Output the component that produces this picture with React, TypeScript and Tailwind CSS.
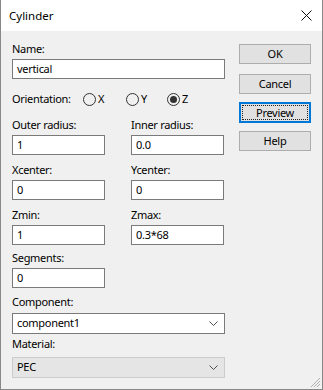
import React from "react";

const font = { fontFamily: '"Noto Sans", "Liberation Sans", sans-serif' };

function Label({ children, className = "" }: { children: React.ReactNode; className?: string }) {
  return <div className={"h-[16px] leading-[16px] text-[11px] tracking-[-0.3px] text-black whitespace-nowrap " + className}>{children}</div>;
}

function Input({ value, className = "" }: { value: string; className?: string }) {
  return (
    <div className={"h-[20px] border border-[#7a7a7a] bg-white pl-[4px] text-[11px] tracking-[-0.3px] leading-[18px] text-black " + className}>
      {value}
    </div>
  );
}

function Chevron() {
  return (
    <svg width="9" height="5" viewBox="0 0 9 5" className="mr-[6px]">
      <path d="M0.5 0.5 L4.5 4.5 L8.5 0.5" fill="none" stroke="#505050" strokeWidth="1" />
    </svg>
  );
}

function Radio({ label, checked }: { label: string; checked?: boolean }) {
  return (
    <div className="flex items-center">
      <div className="w-[13px] h-[13px] rounded-full border border-[#333] bg-[#f0f0f0] flex items-center justify-center">
        {checked && <div className="w-[7px] h-[7px] rounded-full bg-[#333]" />}
      </div>
      <span className="ml-[2px] text-[11px] leading-[16px]">{label}</span>
    </div>
  );
}

function Button({ children, focused }: { children: React.ReactNode; focused?: boolean }) {
  if (focused) {
    return (
      <div className="w-[72px] h-[21px] border-2 border-[#0078d7] bg-[#e1e1e1] p-[1px]">
        <div className="w-full h-full border border-dotted border-[#222] flex items-center justify-center text-[11px] tracking-[-0.3px] leading-[14px]">
          {children}
        </div>
      </div>
    );
  }
  return (
    <div className="w-[72px] h-[20px] border border-[#adadad] bg-[#e1e1e1] flex items-center justify-center text-[11px] tracking-[-0.3px] leading-[16px]">
      {children}
    </div>
  );
}

export default function App() {
  return (
    <div style={font} className="w-[323px] h-[390px] bg-[#f0f0f0] border-x border-b border-[#888] flex flex-col text-black">
      <div className="h-[31px] bg-white flex items-center justify-between pl-[8px] pr-[10px] shrink-0">
        <span className="text-[11.5px] leading-[16px]">Cylinder</span>
        <svg width="11" height="11" viewBox="0 0 11 11">
          <path d="M0.5 0.5 L10.5 10.5 M10.5 0.5 L0.5 10.5" stroke="#111" strokeWidth="1" />
        </svg>
      </div>
      <div className="relative flex-1 flex pl-[11px]">
        <div className="w-[213px] flex flex-col pt-[10px]">
          <Label>Name:</Label>
          <Input value="vertical" className="mt-[2px]" />
          <div className="mt-[12px] h-[16px] flex items-center">
            <span className="text-[11px] tracking-[-0.3px] leading-[16px] w-[71px] whitespace-nowrap">Orientation:</span>
            <div className="w-[43px]"><Radio label="X" /></div>
            <div className="w-[41px]"><Radio label="Y" /></div>
            <Radio label="Z" checked />
          </div>
          <div className="mt-[10px] flex">
            <div className="w-[119px] flex flex-col">
              <Label>Outer radius:</Label>
              <Input value="1" className="mt-[2px] w-[93px]" />
              <Label className="mt-[7px]">Xcenter:</Label>
              <Input value="0" className="mt-[2px] w-[93px]" />
              <Label className="mt-[7px]">Zmin:</Label>
              <Input value="1" className="mt-[2px] w-[93px]" />
            </div>
            <div className="flex flex-col">
              <Label>Inner radius:</Label>
              <Input value="0.0" className="mt-[2px] w-[93px]" />
              <Label className="mt-[7px]">Ycenter:</Label>
              <Input value="0" className="mt-[2px] w-[93px]" />
              <Label className="mt-[7px]">Zmax:</Label>
              <Input value="0.3*68" className="mt-[2px] w-[93px]" />
            </div>
          </div>
          <Label className="mt-[5px]">Segments:</Label>
          <Input value="0" className="mt-[2px] w-[93px]" />
          <Label className="mt-[6px]">Component:</Label>
          <div className="mt-[3px] h-[21px] border border-[#7a7a7a] bg-white flex items-center justify-between pl-[4px] text-[11px] tracking-[-0.3px]">
            <span>component1</span>
            <Chevron />
          </div>
          <Label className="mt-[2px]">Material:</Label>
          <div className="mt-[5px] h-[21px] border border-[#cccccc] bg-[#e5e5e5] flex items-center justify-between pl-[4px] text-[11px] tracking-[-0.3px]">
            <span>PEC</span>
            <Chevron />
          </div>
        </div>
        <div className="ml-[14px] flex flex-col pt-[13px]">
          <Button>OK</Button>
          <div className="mt-[10px]"><Button>Cancel</Button></div>
          <div className="mt-[8px]"><Button focused>Preview</Button></div>
          <div className="mt-[8px]"><Button>Help</Button></div>
        </div>
        <svg width="12" height="12" viewBox="0 0 12 12" className="absolute right-[1px] bottom-[1px]">
          <path d="M11 2 L2 11 M11 5 L5 11 M11 8 L8 11" stroke="#b0b0b0" strokeWidth="1" />
        </svg>
      </div>
    </div>
  );
}
